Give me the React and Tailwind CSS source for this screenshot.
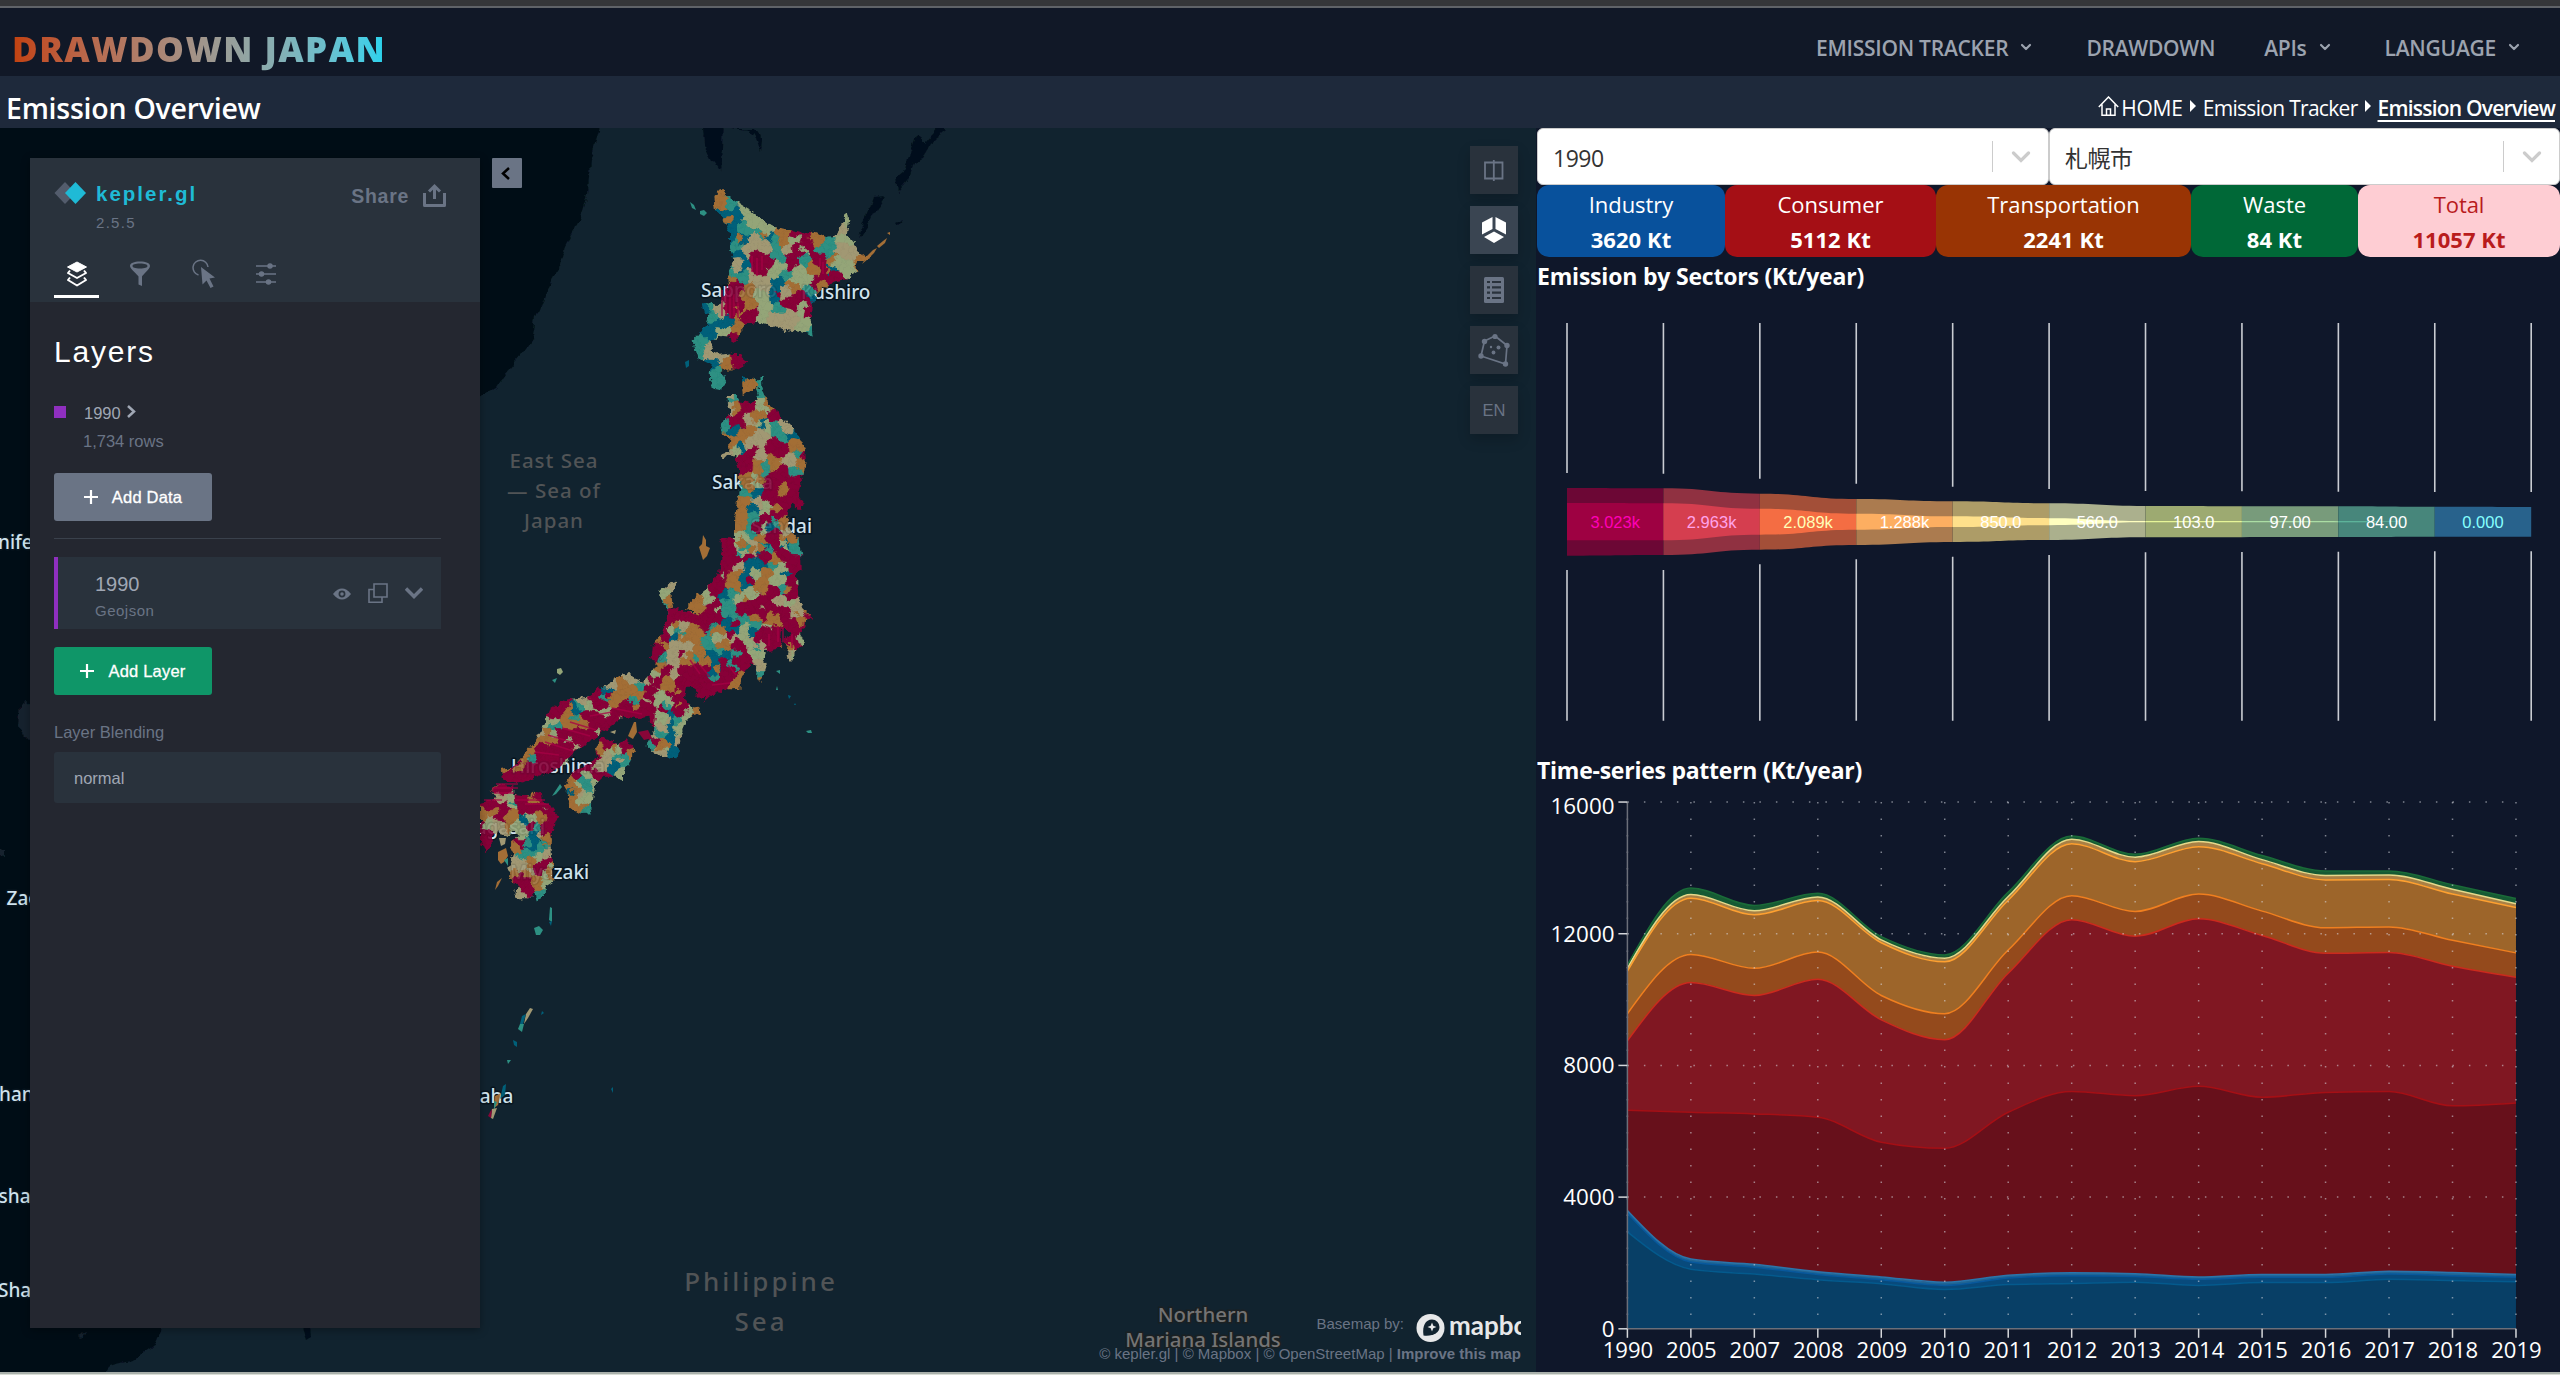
import React from "react";
import { ChevronDown } from "lucide-react";

/* ------------------------------------------------------------------ map */

const REGION_COLORS = {
  R: "#880638",
  O: "#a36e36",
  T: "#a19873",
  G: "#94a578",
  E: "#2d9083",
  B: "#00607a",
};

// How far each class pushes its borders outwards, in pixels.
const REACH = { R: 1.6, O: 1.1, T: 0.4, G: 0.4, E: -0.9, B: -1.1 };

// Municipality seeds: colour class followed by local x,y (1/3 px units).
const NORTH_SEEDS =
  "O240,115 O232,130 E275,125 B250,160 B275,190 B300,170 G320,150 G330,185 G380,200 E365,230 B390,225 T345,240 O430,220 O430,240 E405,245 G465,235 T440,265 R500,225 R500,250 R480,275 R455,298 O530,228 E570,250 E560,280 T600,210 G618,180 G620,230 T605,270 T640,285 G580,312 G620,322 O672,296 R545,295 R552,330 R580,350 B570,325 O530,330 R535,370 O545,375 E290,250 B295,285 B310,235 B275,225 T330,275 T290,318 E270,340 B310,320 T370,262 R350,298 R380,315 R360,325 E420,290 E435,340 E490,305 G480,330 G415,330 T340,350 T370,375 B410,370 B405,405 G470,355 G500,360 E505,390 B510,415 O465,385 R473,410 R450,436 G400,345 T430,400 E415,448 G370,440 G370,470 O270,358 R285,385 R265,425 R285,425 R290,455 O325,405 G355,410 O330,430 O305,458 R315,480 R335,460 T440,465 T450,490 G490,450 G485,500 E512,515 T400,485 B195,440 E220,442 T240,450 E215,475 B240,490 B210,515 B260,480 G255,515 O298,505 R280,538 E185,555 E180,580 T205,575 T240,595 O258,618 R298,605 E235,640 E235,670 B215,608 E300,345 E310,195 " +
  "B310,665 O330,670 O318,690 E365,690 E360,660 O382,735 E285,712 T272,740 O290,745 R320,740 G362,740 O355,772 R403,763 T435,800 E405,800 G375,790 B370,785 R290,780 E255,795 B283,812 T325,785 O318,820 T360,830 E430,832 B460,825 O280,848 B300,870 T335,850 G285,870 O465,862 O482,900 E480,885 R408,862 R412,872 T350,880 T260,887 R310,895 R315,915 O350,925 O400,915 T447,908 E375,925 O330,955 R430,940 R460,965 R400,965 E455,935 O318,970 G345,965 O430,998 B350,1005 E310,992 T362,1022 R390,1003 R425,1018 R465,1015 R488,1040 O305,1040 O300,1085 B340,1040 G380,1040 R415,1055 R380,1080 E340,1075 E410,1090 O428,1088 E330,1125 G368,1098 B378,1108 T435,1120 R400,1135 O360,1140 O450,1140 G300,1145 R265,1155 E310,1172 T345,1165 B375,1165 E390,1165 B438,1150 E460,1165";

const SOUTH_SEEDS =
  "R770,20 R785,72 O815,15 G825,45 B845,65 B858,85 O865,25 E885,22 R912,5 G940,12 R930,45 R890,50 O910,63 B885,75 E918,75 B945,95 R975,75 T800,80 O780,120 B828,105 B835,130 G858,105 O895,100 O870,145 G930,80 G925,125 R972,130 R905,155 E940,150 R965,165 R740,125 R745,145 R755,95 B760,165 E790,155 G820,172 G850,165 T925,175 T980,190 R735,200 O690,180 O670,205 G710,175 E770,205 E800,225 R820,210 R868,190 R890,210 R845,205 O852,228 R920,215 G955,195 R945,225 O910,235 T985,215 R1015,228 O1000,245 R965,250 R915,270 R890,285 R905,310 R965,285 R970,310 G990,300 O955,325 T962,345 T600,145 G582,165 O597,185 E590,200 R640,230 R675,235 R620,222 G603,262 T640,262 O675,265 O660,292 O635,285 R708,255 R590,252 R582,290 R735,238 E728,262 B775,250 B798,262 O742,272 G737,295 E710,310 E745,328 E820,240 E850,250 G828,268 B850,282 G842,305 T780,300 G820,302 R808,315 E797,342 B770,345 O762,315 R872,290 T868,320 O565,300 B622,290 E632,280 T620,325 T655,325 T610,350 T612,375 T640,345 R560,330 R560,348 E572,365 O690,340 E680,358 B718,345 B740,375 B735,395 E732,415 O700,368 O650,362 R585,400 T610,398 O570,385 R650,400 R690,395 R710,425 R680,420 R765,385 R755,430 R795,365 E782,378 R830,360 R790,410 O802,430 T875,382 E870,410 G862,345 E860,325 R640,435 R620,465 R690,445 T478,415 O450,430 T425,442 O460,455 E515,445 T535,420 R550,440 R545,470 O590,430 O612,455 G555,410 E590,497 R632,480 R640,500 G568,478 G660,515 O686,515 B600,535 B605,570 E622,545 G575,530 G645,545 E575,575 B600,595 G630,580 T628,600 O585,615 E545,605 B605,640 T550,590 T575,640 R380,465 R385,490 B412,452 E405,480 T335,485 G360,500 E325,490 O430,485 G405,515 R460,515 R490,515 R530,510 R480,500 E485,480 O500,460 R440,530 R270,495 R250,520 O295,515 B322,508 E305,535 O300,555 O335,550 R360,530 R380,555 R350,585 R320,600 R400,570 R285,590 G240,540 E250,560 G255,580 O240,595 O205,605 T205,580 R210,630 R250,625 R290,620 R330,575 G300,600 E190,652 R220,660 R250,670 R170,690 O140,680 R110,700 R155,712 O175,640 R270,640 R300,650 " +
  "R405,605 O395,630 T415,655 E450,650 E465,672 O482,630 R468,618 G440,625 B432,675 G460,705 B428,688 R372,660 R345,680 R310,690 R385,708 E340,712 E350,735 O300,735 T325,765 B312,755 O305,790 G345,775 E345,810 G375,730 T395,680 O315,745 " +
  "R60,800 R90,748 T95,775 R105,800 O75,815 G130,785 E125,790 R155,785 O187,768 R205,768 R180,805 R215,805 R245,830 R235,865 O210,835 G180,845 E200,862 B165,850 B200,890 B180,925 E222,922 O238,902 T228,938 R150,915 G165,880 O110,835 T70,830 R88,830 O40,835 G50,855 R50,915 R38,870 E165,945 E188,940 R205,985 R235,965 O190,962 T150,965 T130,985 O130,1003 O178,1000 G230,1010 R155,1025 R172,1045 T150,1062 O200,1025 G222,1030 E205,1065 O235,1000 B178,895 G155,865 E165,905 T95,845";

const NORTH_COAST = [
  "220,108 245,90 262,105 290,125 330,150 380,190 425,205 480,218 520,215 560,232 590,225 605,195 623,155 628,180 620,225 645,255 665,285 690,290 685,303 655,303 645,320 655,335 620,355 600,360 570,370 530,400 515,440 512,480 518,530 500,520 440,510 380,495 350,485 325,490 300,520 285,548 272,545 270,530 245,527 216,538 214,568 235,585 270,580 275,585 300,585 322,603 300,628 275,625 265,635 245,625 250,640 258,660 240,690 215,685 212,640 215,615 190,602 165,585 158,540 185,510 200,500 205,465 185,450 182,430 205,430 235,435 250,410 265,380 262,350 270,325 280,300 270,265 270,220 250,180 225,150",
  "306,653 325,655 350,662 365,650 368,690 385,730 400,745 415,750 420,768 445,790 470,815 485,845 496,870 497,900 492,940 480,950 484,975 475,1010 495,1040 480,1047 455,1025 445,1050 440,1080 450,1110 465,1130 480,1170 485,1220 245,1220 243,1180 265,1145 285,1130 285,1090 290,1030 302,985 298,930 288,900 290,880 250,892 248,883 268,876 268,835 245,815 242,795 265,768 275,765 264,730 262,705 290,705 300,722 330,728 357,718 355,690 350,678 330,690 308,706",
];

const SOUTH_COAST = [
  "985,-5 993,40 995,90 980,100 985,170 1000,205 1030,235 1005,250 990,285 1002,310 985,325 965,362 950,348 955,325 940,310 958,280 945,265 932,275 930,300 940,325 915,328 885,335 880,360 890,380 878,415 868,425 858,405 862,378 840,370 830,390 810,420 808,447 770,448 725,465 700,485 708,468 685,470 665,440 650,440 645,480 665,503 685,500 692,520 665,528 640,555 640,580 625,610 620,655 575,650 555,635 530,620 535,595 550,580 545,550 538,530 500,535 460,530 430,555 400,575 370,600 330,620 300,650 290,670 250,690 200,710 160,730 130,730 100,718 92,690 130,682 160,645 190,610 220,560 240,510 280,480 350,470 380,450 420,430 455,405 478,398 490,415 520,425 550,395 560,375 543,350 545,320 575,280 590,240 592,210 575,180 568,155 600,128 622,122 620,138 600,158 607,208 640,210 685,225 655,205 655,190 700,155 715,140 745,105 755,55 755,-5",
  "283,745 300,705 350,675 385,650 378,625 395,590 425,600 440,620 470,598 495,635 480,665 462,690 462,725 440,710 400,710 375,735 370,775 360,795 365,820 335,822 315,810 290,790 298,770",
  "30,790 80,775 62,748 90,732 130,740 130,765 185,770 185,752 212,758 215,780 240,795 265,830 245,880 245,950 250,1025 225,1040 228,1060 200,1085 192,1050 180,1075 140,1075 130,1062 150,1040 120,1018 115,985 130,940 118,915 150,885 130,875 100,890 85,870 65,885 65,910 50,937 30,905",
];

const parsePts = (s) => s.split(" ").map((p) => p.split(",").map(Number));
const place = (s, ox, oy) =>
  parsePts(s)
    .map(([x, y]) => `${(ox + x / 3).toFixed(1)},${(oy + y / 3).toFixed(1)}`)
    .join(" ");

function random(seed) {
  let s = seed;
  return () => {
    s = (s * 1664525 + 1013904223) >>> 0;
    return s / 4294967296;
  };
}

const rnd = random(42);

// Every seed is scattered into a few neighbours so that borders turn irregular.
const seeds = [
  ...NORTH_SEEDS.split(" ").map((s) => [s, 640, 160, 4.5, 0.97]),
  ...SOUTH_SEEDS.split(" ").map((s) => [s, 470, 540, 4.2, 0.92]),
].flatMap(([s, ox, oy, spread, keep]) => {
  const [px, py] = s.slice(1).split(",").map(Number);
  const x = ox + px / 3;
  const y = oy + py / 3;
  const list = [{ c: s[0], x, y }];
  for (let i = 0; i < 3; i++) {
    const c = rnd() < keep ? s[0] : "RROTGO"[Math.floor(rnd() * 6)];
    list.push({ c, x: x + (rnd() - 0.5) * 2 * spread, y: y + (rnd() - 0.5) * 2 * spread });
  }
  return list;
});

function cellOf(a) {
  const r = 26;
  let poly = [
    [a.x - r, a.y - r],
    [a.x + r, a.y - r],
    [a.x + r, a.y + r],
    [a.x - r, a.y + r],
  ];
  for (const b of seeds) {
    if (b === a) continue;
    const dx = b.x - a.x;
    const dy = b.y - a.y;
    if ((dx === 0 && dy === 0) || dx * dx + dy * dy > 4 * 2 * r * r) continue;
    const len = Math.hypot(dx, dy);
    // Power-diagram shift, capped so that close neighbours keep a share.
    const shift = Math.max(-len * 0.3, Math.min(len * 0.3, (REACH[a.c] - REACH[b.c]) / 2));
    const mx = (a.x + b.x) / 2 + (dx / len) * shift;
    const my = (a.y + b.y) / 2 + (dy / len) * shift;
    const side = (p) => (p[0] - mx) * dx + (p[1] - my) * dy;
    const out = [];
    poly.forEach((p, i) => {
      const q = poly[(i + 1) % poly.length];
      const sp = side(p);
      const sq = side(q);
      if (sp <= 0) out.push(p);
      if (sp < 0 !== sq < 0 && sp !== sq) {
        const t = sp / (sp - sq);
        out.push([p[0] + (q[0] - p[0]) * t, p[1] + (q[1] - p[1]) * t]);
      }
    });
    poly = out;
    if (!poly.length) break;
  }
  return poly.map((p) => `${p[0].toFixed(1)},${p[1].toFixed(1)}`).join(" ");
}

const cells = seeds.map((s) => ({ c: REGION_COLORS[s.c], pts: cellOf(s) }));

const ISLANDS = [
  ["E", "690,202 694,205 696,210 692,208"],
  ["E", "700,211 704,210 707,213 704,216 700,214"],
  ["B", "685,362 689,360 689,366 686,368"],
  ["O", "867,256 873,250 877,248 874,253 868,259 862,264"],
  ["O", "877,246 883,241 887,238 885,243 879,248"],
  ["O", "887,233 890,232 890,235"],
  ["O", "703,535 706,540 706,546 710,548 707,556 703,560 699,547 702,544"],
  ["G", "557,669 561,668 563,672 560,675 557,673"],
  ["E", "552,680 557,678 555,683"],
  ["O", "634,722 636,722 637,732 633,739 628,736"],
  ["R", "638,732 648,730 652,738 644,740"],
  ["T", "610,732 616,730 615,734"],
  ["O", "498,852 506,848 508,856 504,862 501,864 498,860"],
  ["E", "504,860 508,858 508,866"],
  ["O", "497,882 502,878 498,886 495,890"],
  ["T", "499,838 506,838 505,844 501,846"],
  ["E", "550,907 552,908 552,922 549,920"],
  ["B", "549,922 552,921 551,926"],
  ["E", "534,928 539,926 543,930 540,935 536,935"],
  ["E", "776,671 780,670 780,674"],
  ["E", "777,686 778,690 776,690"],
  ["B", "788,695 791,696 789,699"],
  ["E", "806,731 811,730 812,733 808,733"],
  ["B", "795,703 796,705 794,705"],
  ["T", "530,1008 533,1009 528,1018 524,1024 526,1014"],
  ["B", "522,1016 526,1014 523,1024 520,1024"],
  ["E", "520,1024 524,1024 522,1032 518,1029"],
  ["B", "513,1040 517,1042 517,1047 514,1045"],
  ["E", "507,1060 511,1060 508,1064"],
  ["B", "503,1086 506,1084 505,1095 500,1099"],
  ["O", "495,1096 501,1093 498,1105 494,1108"],
  ["E", "494,1101 497,1102 494,1110"],
  ["T", "492,1109 497,1108 493,1119 491,1118"],
  ["R", "490,1112 492,1109 491,1118 488,1116"],
  ["B", "542,1011 544,1013 541,1015"],
  ["B", "611,1089 613,1087 613,1093"],
  ["E", "560,784 552,796 556,794 562,787"],
];

const SPIKES = [
  "M722 290v26M726 286v30M730 288v30M734 294v22M738 298v20",
  "M752 256v16M757 258v18M762 256v14M820 258v8M823 262v12",
  "M778 626v16M783 628v14M769 634v12M792 634v14",
  "M548 735l26 8M545 742l28 9M562 728l28 8M570 722l26 8M535 752l24 3M590 716l22-4M612 708l30 6",
  "M492 788h26M494 793h20M496 784h22M515 800h30M525 804h24M484 800h18",
  "M690 660l10 14M700 665l10 12M712 685l18-2M728 665l8 10",
];

const CITY_LABELS = [
  ["Sapporo", 701, 297],
  ["Kushiro", 801, 298.500],
  ["Sakata", 712, 488.500],
  ["Sendai", 751, 533],
  ["Hiroshima", 511, 773],
  ["Nagasaki", 461, 834],
  ["Miyazaki", 510, 879],
  ["Naha", 465, 1103],
  ["nifer", -2, 549],
  ["Zao", 6.500, 905],
  ["han", -1, 1101],
  ["sha", -1.500, 1203],
  ["Sha", -2, 1297],
];

function CityLabels({ opacity }) {
  return (
    <g
      fontFamily="'Noto Sans', sans-serif"
      fontWeight="500"
      fontSize="19"
      fill="#cfe3ee"
      stroke="#08151f"
      strokeWidth="3"
      strokeLinejoin="round"
      paintOrder="stroke"
      opacity={opacity}
    >
      {CITY_LABELS.map(([t, x, y]) => (
        <text key={t} x={x} y={y}>
          {t}
        </text>
      ))}
    </g>
  );
}

function MapCanvas() {
  return (
    <svg viewBox="0 128 1536 1244" className="block h-full w-full">
      <defs>
        <clipPath id="japan">
          {NORTH_COAST.map((c) => (
            <polygon key={c} points={place(c, 640, 160)} />
          ))}
          {SOUTH_COAST.map((c) => (
            <polygon key={c} points={place(c, 470, 540)} />
          ))}
        </clipPath>
        <filter id="rough" x="450" y="150" width="480" height="1000" filterUnits="userSpaceOnUse">
          <feTurbulence type="fractalNoise" baseFrequency="0.16" numOctaves="3" seed="7" />
          <feDisplacementMap in="SourceGraphic" scale="7" xChannelSelector="R" yChannelSelector="G" />
        </filter>
        <filter id="roughCoast" x="-10" y="110" width="1560" height="1280" filterUnits="userSpaceOnUse">
          <feTurbulence type="fractalNoise" baseFrequency="0.08" numOctaves="3" seed="3" />
          <feDisplacementMap in="SourceGraphic" scale="8" xChannelSelector="R" yChannelSelector="G" />
        </filter>
        <linearGradient id="mainland" x1="0" x2="1" y1="0" y2="0">
          <stop offset="0" stopColor="#060d19" />
          <stop offset="0.12" stopColor="#060d19" />
          <stop offset="0.5" stopColor="#050e19" />
          <stop offset="0.75" stopColor="#030f17" />
          <stop offset="1" stopColor="#020f16" />
        </linearGradient>
      </defs>
      <rect x="0" y="128" width="1536" height="1244" fill="#11232f" />
      <g filter="url(#roughCoast)">
        <path
          d="M-20 100H606L597 138 590 160 588 195 580 220 566 245 556 275 545 295 536 318 532 340 522 355 505 375 496 388 482 396 440 430 330 520 120 700 90 900 120 1100 170 1260 161 1330 155 1345 145 1352 133 1360 110 1366 98 1385H-20Z"
          fill="url(#mainland)"
        />
        <path d="M702 110H723L722 150 720 172 712 160 704 145ZM732 128H756L762 140 761 152 756 138 750 130ZM940 125 948 130 932 142 922 158 913 162 908 180 898 192 896 178 905 170 912 148 916 136 925 142ZM873 197 886 196 876 210 870 222 861 237 858 232 866 218ZM904 218 898 225 896 222Z" fill="#060e1b" />
        <path d="M301 1325 310 1325 311 1337 306 1340Z" fill="#060e1b" />
        <path d="M20 704 26 700 32 705 32 738 24 737 18 725ZM0 848 4 850 4 856 0 855ZM78 1336l8-4-4 6Z" fill="#12242f" />
      </g>
      <CityLabels opacity="1" />
      <g filter="url(#rough)">
        <g clipPath="url(#japan)">
          {cells.map((c, i) => (
            <polygon key={i} points={c.pts} fill={c.c} stroke={c.c} strokeWidth="0.8" />
          ))}
        </g>
      </g>
      {ISLANDS.map(([c, p]) => (
        <polygon key={p} points={p} fill={REGION_COLORS[c]} />
      ))}
      <g stroke="#a80045" strokeWidth="1.6" fill="none" opacity="0.75">
        {SPIKES.map((d) => (
          <path key={d} d={d} />
        ))}
      </g>
      <CityLabels opacity="0.1" />
      <g fontFamily="'Noto Sans', sans-serif" textAnchor="middle" fill="#515456">
        <g fontSize="20.5" letterSpacing="1" fontWeight="500">
          <text x="554" y="467.500">East Sea</text>
          <text x="554" y="497.500">— Sea of</text>
          <text x="554" y="527.500">Japan</text>
        </g>
        <g fontSize="26" letterSpacing="3" fontWeight="500">
          <text x="761" y="1291">Philippine</text>
          <text x="761" y="1331">Sea</text>
        </g>
        <g fontSize="20.4" fontWeight="500" fill="#747474" stroke="#1b2022" strokeWidth="3" paintOrder="stroke">
          <text x="1203" y="1322">Northern</text>
          <text x="1203" y="1347">Mariana Islands</text>
        </g>
      </g>
    </svg>
  );
}

/* ---------------------------------------------------------- kepler panel */

function KeplerLogo() {
  return (
    <svg className="h-[22px] w-8" viewBox="0 0 32 22">
      <path d="M11 0 21.500 11 11 22 0.500 11Z" fill="#535c6c" />
      <path d="M21.500 0 32 11 21.500 22 11 11Z" fill="#1fbad6" />
    </svg>
  );
}

function PanelTabs() {
  return (
    <div className="mt-[17px] flex h-[50px] gap-[18px]">
      <div className="flex w-[45px] justify-center border-b-3 border-white pt-[13px]">
        <svg viewBox="0 0 22 26" className="h-[26px] w-[22px]" fill="none" stroke="#fff" strokeWidth="2">
          <path d="M11 1 20.500 6 11 11 1.500 6Z" fill="#fff" strokeLinejoin="round" strokeWidth="1" />
          <path d="M4 9.500 2 12 11 17 20 12 18 9.500" strokeLinejoin="round" />
          <path d="M4 16.500 2 19 11 24.500 20 19 18 16.500" strokeLinejoin="round" />
        </svg>
      </div>
      <div className="flex w-[45px] justify-center pt-[13px]">
        <svg viewBox="0 0 22 26" className="h-[26px] w-[22px]" fill="#6a7485">
          <path d="M1 5C1 2 5 .5 11 .5S21 2 21 5C21 8 13.500 14 13 15.500V25L9.500 23.500V15.500C9 14 1 8 1 5ZM11 2.500C6 2.500 3.500 3.600 3.500 5S6 7.500 11 7.500 18.500 6.400 18.500 5 16 2.500 11 2.500Z" fillRule="evenodd" />
        </svg>
      </div>
      <div className="flex w-[45px] justify-center pt-[11px] pl-0.5">
        <svg viewBox="0 0 24 30" className="h-[30px] w-6" fill="#6a7485">
          <path d="M6.500 16A7.500 7.500 0 1 1 16 8" fill="none" stroke="#6a7485" strokeWidth="1.500" />
          <path d="M9 8 23 18.500 17.500 19.500 21.500 27.500 18.500 29 14.500 21.500 10.500 25.500Z" />
        </svg>
      </div>
      <div className="flex w-[45px] justify-center pt-[14px]">
        <svg viewBox="0 0 20 24" className="h-6 w-5" fill="#6a7485" stroke="#6a7485" strokeWidth="1.500">
          <path d="M0 4H20M0 12H20M0 20H20" />
          <circle cx="14" cy="4" r="2" />
          <circle cx="5.500" cy="12" r="2" />
          <circle cx="12.500" cy="20" r="2" />
        </svg>
      </div>
    </div>
  );
}

function PanelButton({ children, color }) {
  return (
    <div className={`flex h-12 w-[158px] items-center justify-center gap-3.5 rounded-[3px] text-[16.5px] text-white ${color}`}>
      <svg viewBox="0 0 14 14" className="h-3.5 w-3.5" stroke="#fff" strokeWidth="2.200">
        <path d="M7 0V14M0 7H14" />
      </svg>
      <span className="tracking-[0.200px] [-webkit-text-stroke:0.3px_white]">{children}</span>
    </div>
  );
}

function SidePanel() {
  return (
    <aside className="absolute top-[30px] left-[30px] flex h-[1170px] w-[450px] flex-col bg-[#242730] font-['Liberation_Sans',sans-serif] shadow-[0_2px_8px_rgba(0,0,0,0.35)]">
      <header className="h-36 bg-[#29323c] pt-[24px] pl-6">
        <div className="flex items-start">
          <KeplerLogo />
          <div className="ml-2.5">
            <div className="text-[20.5px] leading-[24px] font-bold tracking-[2px] text-[#1fbad6]">kepler.gl</div>
            <div className="mt-[9px] text-[15px] leading-4 tracking-[1.300px] text-[#6a7485]">2.5.5</div>
          </div>
          <div className="mt-[2px] ml-auto flex items-center gap-3.5 pr-[34px] text-[19.500px] leading-6 font-bold tracking-[0.700px] text-[#6a7485]">
            Share
            <svg viewBox="0 0 23 24" className="h-6 w-[23px]" fill="none" stroke="#6a7485" strokeWidth="3">
              <path d="M1.500 9V21.500H21.500V9" strokeLinejoin="round" />
              <path d="M11.500 15V3M6 7.500 11.500 2.200 17 7.500" />
            </svg>
          </div>
        </div>
        <PanelTabs />
      </header>
      <div className="px-6 pt-[30px] pr-[39px]">
        <h2 className="text-[30px] leading-[40px] tracking-[1.800px] text-white">Layers</h2>
        <div className="mt-[28px] flex h-6 items-center text-[16.500px] text-[#a0a7b4]">
          <span className="mr-[18px] h-3 w-3 bg-[#8f2fbf]" />
          <span className="pt-0.5">1990</span>
          <svg viewBox="0 0 9 13" className="mb-0.5 ml-1.5 h-[13px] w-[9px]" fill="none" stroke="#a0a7b4" strokeWidth="2.500">
            <path d="M1 1 7 6.500 1 12" />
          </svg>
        </div>
        <div className="mt-[7px] pl-[29px] text-[16.500px] leading-5 text-[#6a7485]">1,734 rows</div>
        <div className="mt-[22px]">
          <PanelButton color="bg-[#6a7485]">Add Data</PanelButton>
        </div>
        <div className="mt-[17px] h-px bg-[#3a414c]" />
        <div className="mt-[18px] flex h-[72px] items-center border-l-4 border-[#8f2fbf] bg-[#29323c] pr-[18px] pl-[37px]">
          <div className="pt-1.5">
            <div className="text-[20px] leading-6 text-[#a0a7b4]">1990</div>
            <div className="mt-[5px] text-[15px] leading-5 tracking-[0.500px] text-[#6a7485]">Geojson</div>
          </div>
          <svg viewBox="0 0 18 12" className="mt-[2px] ml-auto h-3 w-[18px]">
            <path d="M0 6C3 2 6 .5 9 .5S15 2 18 6C15 10 12 11.500 9 11.500S3 10 0 6Z" fill="#6a7485" />
            <circle cx="9" cy="6" r="2.600" fill="none" stroke="#29323c" strokeWidth="1.700" />
          </svg>
          <svg viewBox="0 0 20 20" className="ml-[17px] h-5 w-5" fill="none" stroke="#6a7485" strokeWidth="1.600">
            <path d="M6 1H19V14H6ZM6 6.500H1V19.200H14V14" />
          </svg>
          <svg viewBox="0 0 18 12" className="ml-[17px] h-3 w-[18px]" fill="none" stroke="#6a7485" strokeWidth="3.400">
            <path d="M1 1.500 9 9.500 17 1.500" />
          </svg>
        </div>
        <div className="mt-[18px]">
          <PanelButton color="bg-[#0f9668]">Add Layer</PanelButton>
        </div>
        <div className="mt-[27px] text-[16.500px] leading-5 text-[#6a7485]">Layer Blending</div>
        <div className="mt-[10px] flex h-[51px] items-center rounded-[3px] bg-[#29323c] pt-0.5 pl-[20px] text-[16.500px] text-[#a0a7b4]">normal</div>
      </div>
    </aside>
  );
}

function ControlButton({ active, children }) {
  return (
    <div className={`flex h-12 w-12 items-center justify-center shadow-[0_6px_12px_rgba(0,0,0,0.18)] ${active ? "bg-[#3a4552]" : "bg-[#29323c]"}`}>
      {children}
    </div>
  );
}

function MapControls() {
  return (
    <div className="absolute top-[18px] right-[18px] flex flex-col gap-3">
      <ControlButton>
        <svg viewBox="0 0 20 21" className="h-[21px] w-5" fill="none" stroke="#6a7485" strokeWidth="1.800">
          <path d="M1 2.500H18.500V18.500H1ZM9.800 0V21" />
        </svg>
      </ControlButton>
      <ControlButton active>
        <svg viewBox="0 0 24 26" className="h-[26px] w-6" fill="#fff">
          <path d="M10.500 0V12L0 17.500V5.500ZM13.500 0 24 5.500V17.500L13.500 12ZM12 14.500 22 20 12 26 2 20Z" />
        </svg>
      </ControlButton>
      <ControlButton>
        <svg viewBox="0 0 20 26" className="h-[26px] w-5">
          <rect width="20" height="26" rx="1.500" fill="#6a7485" />
          <path d="M3 5H6M8 5H17M3 10.300H6M8 10.300H17M3 15.700H6M8 15.700H17M3 21H6M8 21H17" stroke="#29323c" strokeWidth="2.200" />
        </svg>
      </ControlButton>
      <ControlButton>
        <svg viewBox="0 0 32 34" className="h-[34px] w-8" fill="#6a7485">
          <path d="M17 3 29 12.500 27.500 31 3 23 6.500 8Z" fill="none" stroke="#6a7485" strokeWidth="1.700" />
          <circle cx="17" cy="3.500" r="2.600" />
          <circle cx="29" cy="12.500" r="2.700" />
          <circle cx="27.500" cy="31" r="2.700" />
          <circle cx="3" cy="23" r="2.700" />
          <circle cx="6.500" cy="8.500" r="2.700" />
          <circle cx="13" cy="14" r="1.200" />
          <circle cx="20.500" cy="14.500" r="2" />
          <circle cx="15.500" cy="19.500" r="1.900" />
        </svg>
      </ControlButton>
      <ControlButton>
        <span className="font-['Liberation_Sans',sans-serif] text-[16.500px] text-[#6a7485]">EN</span>
      </ControlButton>
    </div>
  );
}

function Attribution() {
  return (
    <div className="absolute right-[15px] bottom-[9px] flex flex-col items-end overflow-hidden font-['Liberation_Sans',sans-serif] text-[15px] leading-[18px] text-[#6a7485]">
      <div className="flex items-center">
        <span className="pb-1.5">Basemap by:</span>
        <svg viewBox="0 0 29 30" className="mt-0.5 ml-[12px] h-[30px] w-[29px]">
          <circle cx="14.500" cy="15" r="14" fill="#e7e8e9" />
          <path d="M7.500 22.500C6 13 9.500 6.500 16 6.500A7.500 7.500 0 0 1 23.500 14C23.500 20 17 23.500 7.500 22.500Z" fill="#11232f" />
          <path d="M16 9.500 17.300 12.700 20.500 14 17.300 15.300 16 18.500 14.700 15.300 11.500 14 14.700 12.700Z" fill="#e7e8e9" />
        </svg>
        <span className="ml-1 w-[72px] overflow-hidden pb-1 font-['Lato',sans-serif] text-[26px] leading-8 font-bold whitespace-nowrap text-[#e7e8e9]">mapbox</span>
      </div>
      <div className="text-[15px]">
        © kepler.gl | © Mapbox | © OpenStreetMap | <b>Improve this map</b>
      </div>
    </div>
  );
}

/* --------------------------------------------------------- right column */

const SECTORS = [
  ["Industry", "3620 Kt", "w-[188px] bg-[#08519c] text-white"],
  ["Consumer", "5112 Kt", "w-[211px] bg-[#a50f15] text-white"],
  ["Transportation", "2241 Kt", "w-[255px] bg-[#993404] text-white"],
  ["Waste", "84 Kt", "w-[167px] bg-[#006837] text-white"],
  ["Total", "11057 Kt", "w-[202px] bg-[#fecdd3] text-[#b91c1c]"],
];

function Select({ value, width }) {
  return (
    <div className={`flex h-[57px] items-center rounded-md border border-[#cccccc] bg-white pl-[15px] text-[#333] ${width}`}>
      <span className="pt-[3px] text-[23px] tracking-[-0.500px]">{value}</span>
      <span className="ml-auto h-[31px] w-[1.500px] bg-[#ccc]" />
      <svg viewBox="0 0 20 12" className="mr-[17px] ml-[18px] h-3 w-5" fill="none" stroke="#ccc" strokeWidth="3.200" strokeLinecap="round">
        <path d="M2.500 2 10 9.500 17.500 2" />
      </svg>
    </div>
  );
}

const FUNNEL = {
  outerTop: [564, 565, 581, 597, 604, 610, 618, 618.500, 619, 620.500, 621],
  outerBottom: [767, 765, 749, 735, 726, 720, 712, 711.500, 711, 710, 710],
  half: [56, 55.500, 39, 24, 16, 10.500, 2, 1.800, 1.600, 0, 0],
  gapTop: [519, 521, 536, 551, 560, 567, 573, 574, 575, 576, 576],
  gapBottom: [810, 810, 793, 778, 770, 765, 757, 756, 755, 754, 754],
  labels: ["3.023k", "2.963k", "2.089k", "1.288k", "850.0", "560.0", "103.0", "97.00", "84.00", "0.000"],
  outer: ["#6c0735", "#903141", "#a34f38", "#ab7b4f", "#ad9c67", "#abb08d", "#9daa71", "#789b7b", "#47867b", "#28628c"],
  inner: ["#9e0142", "#d53e4f", "#f46d43", "#fdae61", "#fee08b", "#ffffbf", "#e6f598", "#abdda4", "#66c2a5", "#3288bd"],
  text: ["#ff00b8", "#ffa3ea", "#ffffb8", "#fff", "#fff", "#fff", "#fff", "#fff", "#fff", "#85ffff"],
};

function FunnelChart() {
  const X = (i) => 31 + i * 96.42;
  const Y = (v) => v / 3 + 5;
  const band = (t0, t1, b0, b1, i) => {
    const a = X(i);
    const b = X(i + 1);
    const m = (a + b) / 2;
    return `M${a} ${Y(t0)}C${m} ${Y(t0)} ${m} ${Y(t1)} ${b} ${Y(t1)}V${Y(b1)}C${m} ${Y(b1)} ${m} ${Y(b0)} ${a} ${Y(b0)}Z`;
  };
  return (
    <svg viewBox="0 0 1024 457" className="block h-[457px] w-[1024px]">
      {FUNNEL.labels.map((l, i) => (
        <g key={l}>
          <path d={band(FUNNEL.outerTop[i], FUNNEL.outerTop[i + 1], FUNNEL.outerBottom[i], FUNNEL.outerBottom[i + 1], i)} fill={FUNNEL.outer[i]} />
          <path d={band(665 - FUNNEL.half[i], 665 - FUNNEL.half[i + 1], 665 + FUNNEL.half[i], 665 + FUNNEL.half[i + 1], i)} fill={FUNNEL.inner[i]} />
        </g>
      ))}
      {FUNNEL.gapTop.map((g, i) => (
        <path key={i} d={`M${X(i)} 28V${Y(g)}M${X(i)} ${Y(FUNNEL.gapBottom[i])}V425.700`} stroke="#c9ccd2" strokeWidth="1.600" />
      ))}
      {FUNNEL.labels.map((l, i) => (
        <text key={l} x={X(i) + 48.200} y="232.500" textAnchor="middle" fontSize="16.500" fontFamily="'Liberation Sans', sans-serif" fill={FUNNEL.text[i]}>
          {l}
        </text>
      ))}
    </svg>
  );
}

const YEARS = [1990, 2005, 2007, 2008, 2009, 2010, 2011, 2012, 2013, 2014, 2015, 2016, 2017, 2018, 2019];

// Cumulative boundaries from bottom to top, in chart units.
const BOUNDS = [
  [1452, 1452, 1452, 1452, 1452, 1452, 1452, 1452, 1452, 1452, 1452, 1452, 1452, 1452, 1452],
  [1213, 1305, 1317, 1331, 1341, 1355, 1343, 1340, 1337, 1345, 1338, 1338, 1330, 1333, 1336],
  [1167, 1287, 1300, 1318, 1331, 1345, 1327, 1321, 1323, 1330, 1325, 1325, 1317, 1321, 1325],
  [1160, 1280, 1293, 1311, 1324, 1337, 1320, 1314, 1316, 1324, 1318, 1318, 1310, 1313, 1318],
  [913, 918, 922, 930, 992, 1007, 918, 867, 877, 854, 881, 869, 867, 902, 895],
  [742, 598, 630, 590, 690, 739, 575, 443, 484, 441, 482, 526, 524, 558, 585],
  [675, 529, 563, 523, 630, 675, 518, 384, 423, 380, 422, 463, 461, 494, 525],
  [570, 390, 431, 396, 500, 547, 395, 256, 300, 263, 305, 345, 344, 380, 413],
  [562, 381, 421, 387, 493, 538, 386, 245, 289, 250, 295, 334, 333, 368, 404],
  [555, 365, 408, 378, 485, 530, 375, 237, 282, 242, 285, 323, 323, 357, 391],
];

const AREA_STYLE = [
  ["#083f66", "#045a8d"],
  ["#084a7c", "#08589c"],
  ["#1f6494", "#2b75ab"],
  ["#67101b", "#a50f15"],
  ["#801722", "#cb2a1d"],
  ["#944a1c", "#f07f1f"],
  ["#9d652a", "#fea030"],
  ["#a98045", "#e6d98a"],
  ["#165a34", "#1a6b38"],
];

function StackedArea() {
  const step = 63.470;
  const left = 91.400;
  const X = (i) => left + i * step;
  const Y = (v) => v / 2.466 - 50;
  const slopes = (ys) => {
    const n = ys.length;
    const d = ys.slice(1).map((y, i) => (y - ys[i]) / step);
    const t = ys.map((_, i) => {
      if (i === 0 || i === n - 1) return 0;
      const a = d[i - 1];
      const b = d[i];
      const p = (a + b) / 2;
      return (Math.sign(a) + Math.sign(b)) * Math.min(Math.abs(a), Math.abs(b), 0.5 * Math.abs(p)) || 0;
    });
    t[0] = (3 * d[0] - t[1]) / 2;
    t[n - 1] = (3 * d[n - 2] - t[n - 2]) / 2;
    return t;
  };
  const curve = (row, reverse) => {
    const ys = row.map(Y);
    const t = slopes(ys);
    const h = step / 3;
    let s = "";
    if (!reverse) {
      s = `${X(0)} ${ys[0]}`;
      for (let i = 1; i < ys.length; i++)
        s += `C${X(i - 1) + h} ${ys[i - 1] + h * t[i - 1]} ${X(i) - h} ${ys[i] - h * t[i]} ${X(i)} ${ys[i]}`;
    } else {
      s = `${X(ys.length - 1)} ${ys[ys.length - 1]}`;
      for (let i = ys.length - 1; i > 0; i--)
        s += `C${X(i) - h} ${ys[i] - h * t[i]} ${X(i - 1) + h} ${ys[i - 1] + h * t[i - 1]} ${X(i - 1)} ${ys[i - 1]}`;
    }
    return s;
  };
  const grid = [0, 4000, 8000, 12000, 16000];
  const gy = (v) => Y(1452 - (v / 16000) * 1299);
  return (
    <svg viewBox="0 0 1024 582" className="block h-[582px] w-[1024px]" fontFamily="'Open Sans', sans-serif">
      {AREA_STYLE.map(([fill], k) => (
        <path key={k} d={`M${curve(BOUNDS[k + 1])}L${curve(BOUNDS[k], true)}Z`} fill={fill} />
      ))}
      {AREA_STYLE.map(([, stroke], k) => (
        <path key={k} d={`M${curve(BOUNDS[k + 1])}`} fill="none" stroke={stroke} strokeWidth="1.500" />
      ))}
      <g stroke="#d8dbe2" strokeOpacity="0.55" strokeWidth="1.500" strokeDasharray="1.500 15">
        {grid.slice(1).map((v) => (
          <path key={v} d={`M${left} ${gy(v)}H${X(14)}`} />
        ))}
        {YEARS.map((y, i) => (
          <path key={y} d={`M${X(i)} ${gy(16000)}V${gy(0)}`} />
        ))}
      </g>
      <path d={`M${left} ${gy(16000)}V${gy(0)}H${X(14)}`} fill="none" stroke="#6b6f79" strokeWidth="1.500" />
      <g stroke="#d5d7db" strokeWidth="1.500">
        {grid.map((v) => (
          <path key={v} d={`M${left - 9} ${gy(v)}H${left}`} />
        ))}
        {YEARS.map((y, i) => (
          <path key={y} d={`M${X(i)} ${gy(0)}v9`} />
        ))}
      </g>
      <g fill="#fff" fontSize="22.500">
        {grid.map((v) => (
          <text key={v} x="78.500" y={gy(v) + (v === 16000 ? 11.5 : 8)} textAnchor="end" textLength={String(v).length * 12.800} lengthAdjust="spacingAndGlyphs">
            {v}
          </text>
        ))}
        {YEARS.map((y, i) => (
          <text key={y} x={X(i) + 0.500} y={gy(0) + 29} textAnchor="middle" textLength="50.500" lengthAdjust="spacingAndGlyphs">
            {y}
          </text>
        ))}
      </g>
    </svg>
  );
}

function Dashboard() {
  return (
    <section className="flex w-[1024px] flex-col bg-[#0f172a] pl-px text-white">
      <div className="flex">
        <Select value="1990" width="w-[512px]" />
        <Select value="札幌市" width="w-[511px]" />
      </div>
      <div className="flex">
        {SECTORS.map(([name, value, cls]) => (
          <div key={name} className={`flex h-[72px] flex-col items-center rounded-xl pt-0.5 leading-[35px] ${cls}`}>
            <span className="text-[22px] tracking-[-0.050px]">{name}</span>
            <span className="text-[22px] font-bold tracking-[0.050px]">{value}</span>
          </div>
        ))}
      </div>
      <h3 className="h-[38px] text-[23px] leading-[38px] font-bold tracking-[-0.200px]">Emission by Sectors (Kt/year)</h3>
      <div className="-ml-px">
        <FunnelChart />
      </div>
      <h3 className="h-[38px] text-[23px] leading-[36px] font-bold tracking-[-0.250px]">Time-series pattern (Kt/year)</h3>
      <div className="-ml-px">
        <StackedArea />
      </div>
    </section>
  );
}

/* --------------------------------------------------------------- header */

function NavItem({ children, menu }) {
  return (
    <span className="flex items-center gap-2.5">
      {children}
      {menu && <ChevronDown className="mb-1 h-4 w-4" strokeWidth={3.2} />}
    </span>
  );
}

function Crumb() {
  return (
    <svg viewBox="0 0 6 12" className="mr-[7px] ml-[7px] mb-1 h-3 w-1.5" fill="#fff">
      <path d="M0 0 6 6 0 12Z" />
    </svg>
  );
}

export default function App() {
  return (
    <div className="flex h-[1375px] w-[2560px] flex-col overflow-hidden bg-[#0f172a] font-['Open_Sans','Noto_Sans_CJK_JP',sans-serif]">
      <div className="h-2 border-b-2 border-[#606368] bg-[#353639]" />
      <nav className="flex h-[68px] items-center bg-[#111827] pt-[14px] pr-[38px] pl-[12px] text-[#9ca3af]">
        <span className="bg-linear-to-r from-[#c2410c] to-[#22d3ee] bg-clip-text text-[35px] leading-[44px] font-extrabold tracking-[1.450px] text-transparent">DRAWDOWN JAPAN</span>
        <div className="ml-auto flex items-center text-[21px] font-semibold tracking-[-0.250px]">
          <NavItem menu>EMISSION TRACKER</NavItem>
          <span className="ml-[52px]">
            <NavItem>DRAWDOWN</NavItem>
          </span>
          <span className="ml-[49px]">
            <NavItem menu>APIs</NavItem>
          </span>
          <span className="ml-[52px]">
            <NavItem menu>LANGUAGE</NavItem>
          </span>
        </div>
      </nav>
      <div className="flex h-[52px] items-center justify-between bg-[#1e293b] pt-3 pr-[5px] pl-[6px] text-white">
        <h1 className="text-[28.500px] leading-9 font-semibold tracking-[-0.250px]">Emission Overview</h1>
        <div className="flex items-center text-[21px] leading-7 tracking-[-0.700px]">
          <svg viewBox="0 0 21 20" className="mb-1 h-5 w-[21px]" fill="none" stroke="#fff" strokeWidth="1.500">
            <path d="M.8 11 10.500 1 20.200 11M4 8.500V19.200H17V8.500M8.500 19V13H12.500V19" />
          </svg>
          <span className="ml-0.5 tracking-[-0.200px]">HOME</span>
          <Crumb />
          <span>Emission Tracker</span>
          <Crumb />
          <span className="font-semibold tracking-[-0.780px] underline decoration-2 underline-offset-4">Emission Overview</span>
        </div>
      </div>
      <main className="flex h-[1244px]">
        <section className="relative w-[1536px] overflow-hidden">
          <MapCanvas />
          <SidePanel />
          <div className="absolute top-[30px] left-[492px] flex h-[30px] w-[30px] items-center justify-center rounded-[1px] bg-[#6a7485] pr-1">
            <svg viewBox="0 0 9 13" className="h-[13px] w-[9px]" fill="none" stroke="#000" strokeWidth="2.500">
              <path d="M8 1 2 6.500 8 12" />
            </svg>
          </div>
          <MapControls />
          <Attribution />
        </section>
        <Dashboard />
      </main>
      <div className="h-[3px] border-b border-[#d9ded6] bg-[#a9b0ab]" />
    </div>
  );
}
